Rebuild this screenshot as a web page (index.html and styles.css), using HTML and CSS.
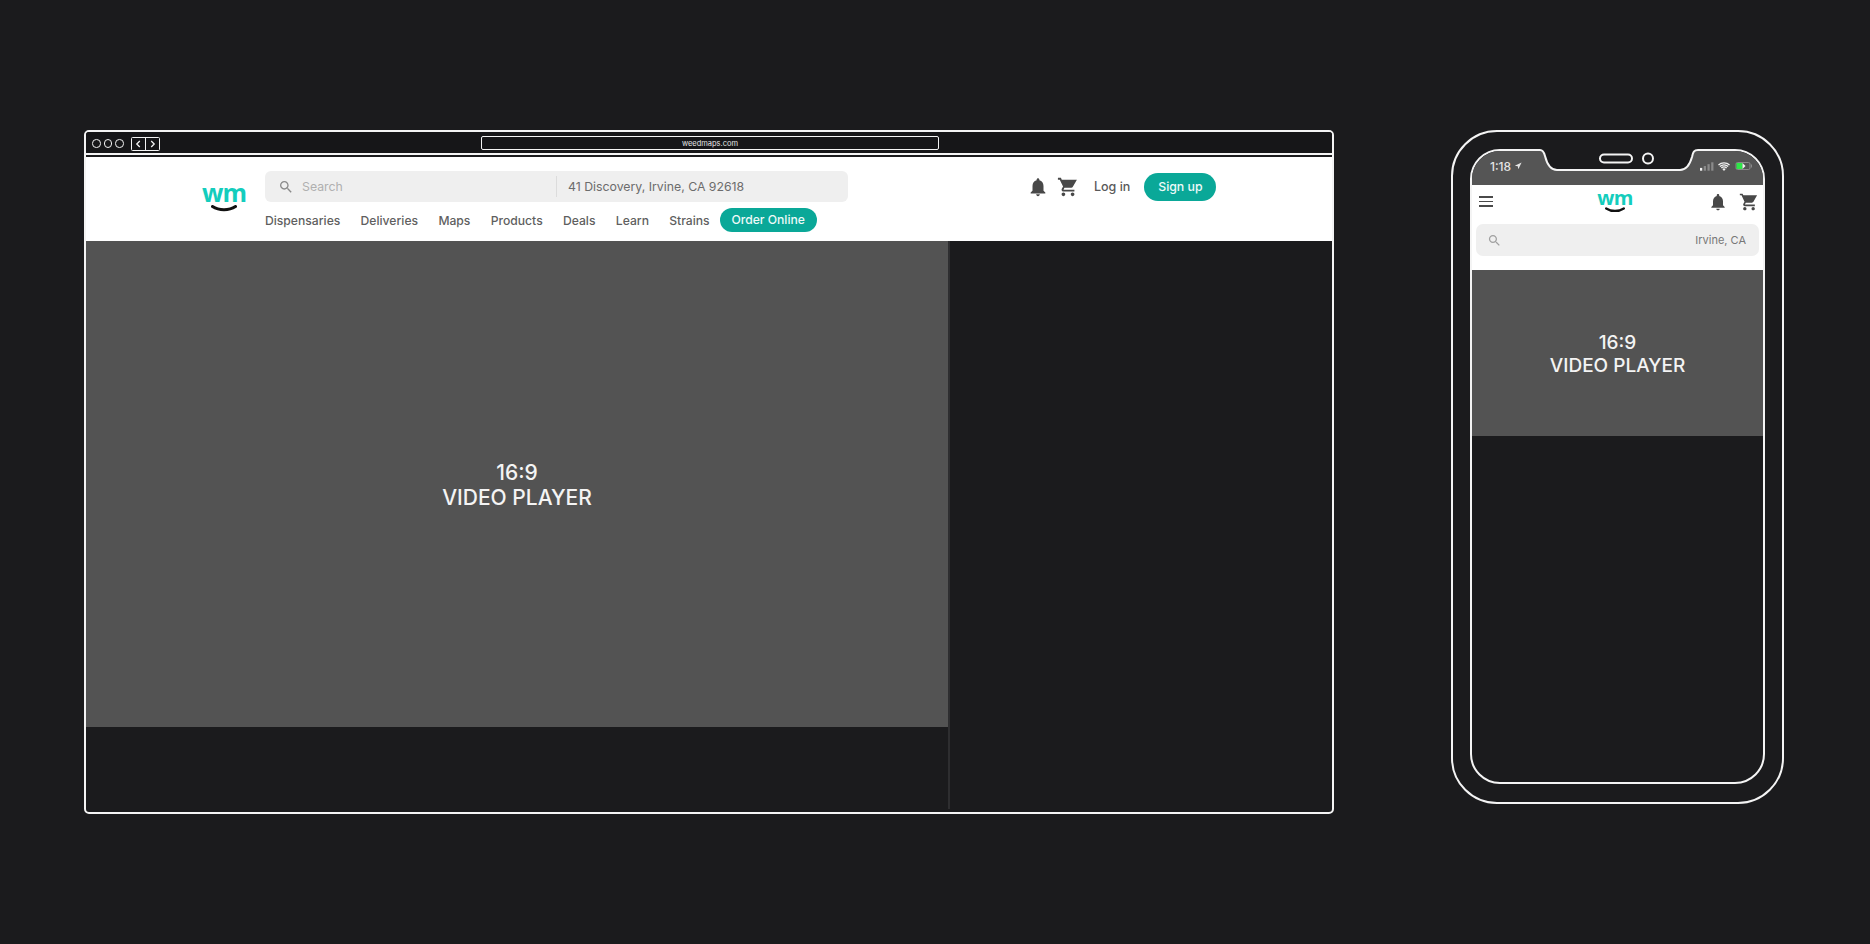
FILE: index.html
```html
<!DOCTYPE html>
<html lang="en">
<head>
<meta charset="utf-8">
<title>Weedmaps video player layouts</title>
<link rel="stylesheet" href="styles.css">
</head>
<body>
<svg class="sprite" aria-hidden="true">
  <symbol id="i-bell" viewBox="0 0 24 24"><path d="M12 22c1.1 0 2-.9 2-2h-4c0 1.1.9 2 2 2zm6-6v-5c0-3.07-1.63-5.64-4.5-6.32V4c0-.83-.67-1.5-1.5-1.5s-1.5.67-1.5 1.5v.68C7.64 5.36 6 7.92 6 11v5l-2 2v1h16v-1l-2-2z"/></symbol>
  <symbol id="i-cart" viewBox="0 0 24 24"><path d="M7 18c-1.1 0-1.99.9-1.99 2S5.9 22 7 22s2-.9 2-2-.9-2-2-2zM1 2v2h2l3.6 7.59-1.35 2.45c-.16.28-.25.61-.25.96 0 1.1.9 2 2 2h12v-2H7.42c-.14 0-.25-.11-.25-.25l.03-.12.9-1.83h7.45c.75 0 1.41-.41 1.75-1.03L21.7 4H5.21l-.94-2H1zm16 16c-1.1 0-1.99.9-1.99 2s.89 2 1.99 2 2-.9 2-2-.9-2-2-2z"/></symbol>
  <symbol id="i-search" viewBox="0 0 24 24"><path d="M15.5 14h-.79l-.28-.27C15.41 12.59 16 11.11 16 9.5 16 5.91 13.09 3 9.5 3S3 5.91 3 9.5 5.91 16 9.5 16c1.61 0 3.09-.59 4.23-1.57l.27.28v.79l5 4.99L20.49 19l-4.99-5zm-6 0C7.01 14 5 11.99 5 9.5S7.01 5 9.5 5 14 7.01 14 9.5 11.99 14 9.5 14z"/></symbol>
  <symbol id="i-smile" viewBox="0 0 26 7"><path d="M1.500 1.500C8 5.800 18 5.800 24.500 1.500" fill="none" stroke="#111" stroke-width="3" stroke-linecap="round"/></symbol>
</svg>

<main class="stage">
  <section class="browser">
    <div class="titlebar">
      <div class="lights"><i class="light"></i><i class="light"></i><i class="light"></i></div>
      <div class="arrows">
        <span class="arrow"><svg viewBox="0 0 14 14"><path d="M8.500 3.500 5 7l3.500 3.500"/></svg></span>
        <span class="arrow"><svg viewBox="0 0 14 14"><path d="M5.500 3.500 9 7l-3.500 3.500"/></svg></span>
      </div>
      <div class="urlbar">weedmaps.com</div>
    </div>

    <header class="site-header">
      <div class="logo">
        <span class="logo-word">wm</span>
        <svg class="logo-smile"><use href="#i-smile"/></svg>
      </div>
      <div class="header-main">
        <div class="header-top">
          <div class="searchbox">
            <div class="search-left">
              <svg class="search-icon"><use href="#i-search"/></svg>
              <span class="search-placeholder">Search</span>
            </div>
            <div class="search-address">41 Discovery, Irvine, CA 92618</div>
          </div>
          <div class="actions">
            <svg class="action-icon bell"><use href="#i-bell"/></svg>
            <svg class="action-icon cart"><use href="#i-cart"/></svg>
            <span class="login">Log in</span>
            <span class="signup">Sign up</span>
          </div>
        </div>
        <nav class="site-nav">
          <span class="nav-link">Dispensaries</span>
          <span class="nav-link">Deliveries</span>
          <span class="nav-link">Maps</span>
          <span class="nav-link">Products</span>
          <span class="nav-link">Deals</span>
          <span class="nav-link">Learn</span>
          <span class="nav-link">Strains</span>
          <span class="order">Order Online</span>
        </nav>
      </div>
    </header>

    <div class="browser-body">
      <div class="player-col">
        <div class="video video-desktop"><span>16:9</span><span>VIDEO PLAYER</span></div>
      </div>
    </div>
  </section>

  <section class="phone">
    <div class="screen">
      <div class="statusbar">
        <div class="status-left">
          <span>1:18</span>
          <svg class="loc" viewBox="0 0 10 10"><path d="M9.500.5 1 4.600l3.700.7.7 3.700z"/></svg>
        </div>
        <div class="status-right">
          <svg class="signal" viewBox="0 0 15 9"><rect x="0" y="6" width="2.400" height="3" fill="#f2f2f2"/><rect x="4" y="4" width="2.400" height="5" fill="#8a8a8a"/><rect x="8" y="2" width="2.400" height="7" fill="#8a8a8a"/><rect x="12" y="0" width="2.400" height="9" fill="#8a8a8a"/></svg>
          <svg class="wifi" viewBox="0 0 12 9"><path d="M6 9 4.300 7a2.400 2.400 0 0 1 3.400 0zM2.900 5.600a4.400 4.400 0 0 1 6.200 0l-.9 1a3.100 3.100 0 0 0-4.400 0zM1.400 4.100a6.500 6.500 0 0 1 9.200 0l-.9 1a5.200 5.200 0 0 0-7.400 0zM0 2.600a8.600 8.600 0 0 1 12 0l-.9 1a7.300 7.300 0 0 0-10.200 0z" fill="#f2f2f2"/></svg>
          <svg class="battery" viewBox="0 0 17 8"><rect x=".5" y=".5" width="14" height="7" rx="1.500" fill="none" stroke="#8a8a8a"/><rect x="1" y="1" width="6" height="6" fill="#2fe648"/><path d="M7 1 10 4 7 7z" fill="#f2f2f2"/><rect x="15.500" y="2.500" width="1" height="3" fill="#8a8a8a"/></svg>
        </div>
      </div>
      <header class="m-header">
        <div class="m-top">
          <div class="burger"><i></i><i></i><i></i></div>
          <div class="logo m-logo">
            <span class="logo-word">wm</span>
            <svg class="logo-smile"><use href="#i-smile"/></svg>
          </div>
          <div class="m-actions">
            <svg class="m-icon"><use href="#i-bell"/></svg>
            <svg class="m-icon"><use href="#i-cart"/></svg>
          </div>
        </div>
        <div class="m-search">
          <svg class="m-search-icon"><use href="#i-search"/></svg>
          <span>Irvine, CA</span>
        </div>
      </header>
      <div class="video video-mobile"><span>16:9</span><span>VIDEO PLAYER</span></div>
    </div>
    <svg class="notch" viewBox="0 0 172 24" aria-hidden="true">
      <path d="M0 1H5C8 1 9 3 10 7 12 15 16 21 22 21H145C151 21 155 15 157 8 158 3 159 1 163 1H172V-1H0z" fill="#1b1b1d"/>
      <path d="M0 1H5C8 1 9 3 10 7 12 15 16 21 22 21H145C151 21 155 15 157 8 158 3 159 1 163 1H172" fill="none" stroke="#f4f4f4" stroke-width="2"/>
      <rect x="65" y="5.500" width="32" height="8" rx="4" fill="none" stroke="#f4f4f4" stroke-width="2"/>
      <circle cx="113" cy="9.500" r="5" fill="none" stroke="#f4f4f4" stroke-width="2"/>
    </svg>
  </section>
</main>
</body>
</html>
```

FILE: styles.css
```css
* {
  box-sizing: border-box;
}

html,
body {
  margin: 0;
  height: 100%;
}

body {
  background: #1b1b1d;
  font-family: Inter, "Noto Sans", "Liberation Sans", sans-serif;
  overflow: hidden;
}

.sprite {
  display: none;
}

.stage {
  display: flex;
  align-items: flex-start;
  padding: 130px 0 0 84px;
  gap: 117px;
}

/* desktop browser */
.browser {
  width: 1250px;
  height: 684px;
  border: 2px solid #f4f4f4;
  border-radius: 5px;
  display: flex;
  flex-direction: column;
  overflow: hidden;
  background: #1b1b1d;
}

.titlebar {
  height: 23px;
  flex: none;
  display: flex;
  align-items: center;
  padding: 2px 0 0 6px;
  border-bottom: 2px solid #f4f4f4;
  background: #161618;
  position: relative;
}

.lights {
  display: flex;
  gap: 3px;
}

.light {
  width: 8.500px;
  height: 8.500px;
  border: 1.500px solid #f4f4f4;
  border-radius: 50%;
}

.arrows {
  display: flex;
  margin-left: 7px;
  width: 29px;
  height: 14px;
  border: 1.500px solid #f4f4f4;
  border-radius: 1.500px;
}

.arrow {
  flex: 1;
  display: flex;
}

.arrow + .arrow {
  border-left: 1.500px solid #f4f4f4;
}

.arrow svg {
  width: 100%;
  height: 100%;
  fill: none;
  stroke: #f4f4f4;
  stroke-width: 1.500;
}

.urlbar {
  position: absolute;
  left: 395px;
  top: 4px;
  width: 458px;
  height: 14px;
  border: 1.500px solid #f4f4f4;
  border-radius: 2px;
  color: #e6e6e6;
  font-size: 7.500px;
  line-height: 13px;
  text-align: center;
}

.site-header {
  flex: none;
  height: 84px;
  margin-top: 2px;
  background: #fff;
  display: flex;
  padding: 14px 0 0 117px;
}

.logo {
  display: flex;
  flex-direction: column;
  align-items: center;
}

.logo-word {
  color: #14cdbd;
  font-family: "Open Sans", sans-serif;
  font-weight: 700;
  font-size: 25px;
  line-height: 20px;
  letter-spacing: -1px;
}

.logo-smile {
  width: 26px;
  height: 7px;
  margin-top: 3px;
}

.site-header .logo {
  width: 44px;
  margin-top: 11px;
  padding-right: 2px;
}

.header-main {
  margin-left: 18px;
  display: flex;
  flex-direction: column;
}

.header-top {
  display: flex;
  align-items: center;
}

.searchbox {
  width: 583px;
  height: 31px;
  background: #efefef;
  border-radius: 6px;
  display: flex;
  align-items: center;
  font-size: 12.300px;
}

.search-left {
  width: 292px;
  height: 21px;
  display: flex;
  align-items: center;
  padding-left: 13px;
  border-right: 1px solid #dcdcdc;
  color: #b0b0b0;
}

.search-icon {
  width: 16px;
  height: 16px;
  fill: #8a8a8a;
}

.search-placeholder {
  margin-left: 8px;
}

.search-address {
  margin-left: 11px;
  color: #6c6c6c;
}

.actions {
  display: flex;
  align-items: center;
  margin-left: 179px;
}

.action-icon {
  width: 22px;
  height: 22px;
  fill: #484848;
}

.cart {
  margin-left: 8px;
}

.login {
  margin-left: 15px;
  font-size: 12.500px;
  font-weight: 500;
  color: #5a5a5a;
}

.signup {
  margin-left: 14px;
  width: 72px;
  height: 28px;
  border-radius: 14px;
  background: #0aa898;
  color: #eefaf8;
  font-size: 12.300px;
  font-weight: 500;
  line-height: 28px;
  text-align: center;
}

.site-nav {
  display: flex;
  align-items: center;
  margin-top: 6px;
  font-size: 12.150px;
  color: #5f5f5f;
}

.nav-link {
  margin-right: 20.300px;
  font-weight: 500;
}

.nav-link:nth-child(7) {
  margin-right: 10px;
}

.order {
  width: 97px;
  height: 24px;
  border-radius: 12px;
  background: #0aa898;
  color: #eefaf8;
  font-weight: 500;
  line-height: 24px;
  text-align: center;
}

.browser-body {
  flex: 1;
  display: flex;
  padding-bottom: 3px;
}

.player-col {
  width: 864px;
  border-right: 2px solid #2e2e30;
}

.video {
  background: #535353;
  color: #f4f4f4;
  font-weight: 500;
  display: flex;
  flex-direction: column;
  align-items: center;
  justify-content: center;
  padding-top: 2px;
  text-align: center;
}

.video-desktop {
  height: 486px;
  font-size: 21px;
  line-height: 25px;
}

/* phone */
.phone {
  position: relative;
  width: 333px;
  height: 674px;
  padding: 17px 17px 18px;
  border: 2px solid #f4f4f4;
  border-radius: 46px;
}

.screen {
  height: 100%;
  border: 2px solid #f4f4f4;
  border-radius: 30px;
  overflow: hidden;
}

.statusbar {
  height: 34px;
  background: #555;
  display: flex;
  justify-content: space-between;
  align-items: center;
  padding: 0 10px 4px 18px;
  color: #e4e4e4;
  font-size: 12px;
  font-weight: 500;
}

.status-left,
.status-right {
  display: flex;
  align-items: center;
}

.loc {
  width: 8px;
  height: 8px;
  margin-left: 3px;
  fill: #e4e4e4;
}

.signal {
  width: 14px;
  height: 9px;
}

.wifi {
  width: 12px;
  height: 9px;
  margin-left: 4px;
}

.battery {
  width: 18px;
  height: 8px;
  margin-left: 5px;
}

.m-header {
  height: 85px;
  background: #fff;
  padding: 0 4px;
}

.m-top {
  height: 39px;
  display: grid;
  grid-template-columns: 1fr auto 1fr;
  align-items: center;
  padding: 0 0 6px 3px;
}

.burger {
  width: 14px;
  display: flex;
  flex-direction: column;
  gap: 3px;
}

.burger i {
  height: 1.500px;
  background: #4a4a4a;
}

.m-logo {
  margin-right: 8px;
}

.m-logo .logo-word {
  font-size: 20px;
  line-height: 13px;
  letter-spacing: -0.7px;
}

.m-logo .logo-smile {
  width: 20px;
  height: 6px;
  margin-top: 3px;
}

.m-actions {
  justify-self: end;
  display: flex;
  align-items: center;
  gap: 11px;
}

.m-icon {
  width: 20px;
  height: 20px;
  fill: #484848;
}

.m-search {
  height: 32px;
  border-radius: 7px;
  background: #efefef;
  display: flex;
  align-items: center;
  justify-content: space-between;
  padding: 0 13px 0 11px;
  color: #777;
  font-size: 11px;
}

.m-search-icon {
  width: 15px;
  height: 15px;
  fill: #a0a0a0;
}

.video-mobile {
  height: 166px;
  font-size: 19px;
  line-height: 23px;
}

.notch {
  position: absolute;
  left: 82px;
  top: 17px;
  width: 172px;
  height: 24px;
  overflow: visible;
}
```
